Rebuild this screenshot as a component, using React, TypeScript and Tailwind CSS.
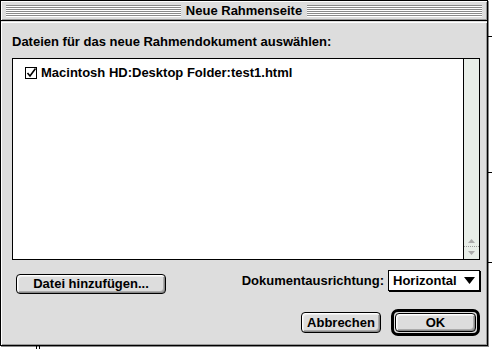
import React from "react";

// Mac OS 8 "Neue Rahmenseite" dialog

const FONT = "font-['Liberation_Sans',Arial,sans-serif]";

function Stripes({ className = "" }: { className?: string }) {
  return (
    <div
      className={[
        "h-[12px] bg-[repeating-linear-gradient(to_bottom,#8a8a8a_0px,#8a8a8a_1px,#ffffff_1px,#ffffff_2px)]",
        className,
      ].join(" ")}
    />
  );
}

function MacButton({ label, className = "" }: { label: string; className?: string }) {
  return (
    <div
      className={[
        "flex items-center justify-center rounded-[4px] border border-black bg-[#dddddd] text-[13px] font-bold text-black",
        "shadow-[inset_1px_1px_0_#ffffff,inset_-1px_-1px_0_#888888,inset_2px_2px_0_#eeeeee,inset_-2px_-2px_0_#aaaaaa]",
        className,
      ].join(" ")}
    >
      {label}
    </div>
  );
}

export default function App() {
  return (
    <div className={`relative h-[349px] w-[492px] overflow-hidden bg-white ${FONT}`}>
      {/* desktop marks behind the dialog */}
      <div className="absolute right-0 top-[36px] h-px w-[4px] bg-black" />
      <div className="absolute right-0 top-[172px] h-px w-[4px] bg-black" />
      <div className="absolute right-0 top-[262px] h-px w-[4px] bg-black" />
      <div className="absolute bottom-0 left-[36px] h-[4px] w-px bg-black" />
      <div className="absolute bottom-0 left-[39px] h-[4px] w-px bg-black" />

      <div className="flex h-[346px] w-[488px] flex-col border border-black bg-[#dddddd] shadow-[1px_1px_0_#888888]">
        {/* title bar */}
        <div className="flex h-[20px] items-center gap-[5px] border-b border-black px-[5px] shadow-[inset_1px_1px_0_#ffffff,inset_-1px_-1px_0_#999999]">
          <Stripes className="flex-1" />
          <div className="text-[13px] font-bold leading-none text-black">Neue Rahmenseite</div>
          <Stripes className="flex-1" />
        </div>

        {/* content */}
        <div className="flex flex-1 flex-col border-t border-[#dddddd] pl-[11px] pr-[7px] pt-[12px] shadow-[inset_1px_1px_0_#ffffff,inset_-1px_-1px_0_#999999]">
          <div className="h-[16px] text-[13px] font-bold leading-[16px] text-black">
            Dateien für das neue Rahmendokument auswählen:
          </div>

          {/* file list */}
          <div className="mt-[8px] flex h-[202px] border border-black bg-white">
            <div className="flex-1 pl-[12px] pt-[7px]">
              <div className="flex items-center gap-[4px]">
                <svg width="12" height="12" viewBox="0 0 12 12">
                  <rect x="0.5" y="0.5" width="11" height="11" fill="#fff" stroke="#000" />
                  <path d="M2.5 6 L5 9 L10.5 1.5" fill="none" stroke="#000" strokeWidth="1.6" />
                </svg>
                <span className="text-[13px] font-bold leading-[14px] text-black">
                  Macintosh HD:Desktop Folder:test1.html
                </span>
              </div>
            </div>
            <div className="flex w-[16px] flex-col justify-end border-l border-black bg-[#e8eee8]">
              <div className="flex h-[12px] items-center justify-center border-b border-dotted border-[#999999]">
                <svg width="7" height="4" viewBox="0 0 7 4">
                  <path d="M3.5 0 L7 4 L0 4 Z" fill="#aaaaaa" />
                </svg>
              </div>
              <div className="flex h-[12px] items-center justify-center">
                <svg width="7" height="4" viewBox="0 0 7 4">
                  <path d="M0 0 L7 0 L3.5 4 Z" fill="#aaaaaa" />
                </svg>
              </div>
            </div>
          </div>

          {/* add button + orientation popup */}
          <div className="mt-[10px] flex items-start justify-between">
            <MacButton label="Datei hinzufügen..." className="ml-[4px] mt-[4px] h-[20px] w-[150px]" />
            <div className="flex items-center gap-[4px]">
              <span className="text-[13px] font-bold text-black">Dokumentausrichtung:</span>
              <div className="flex h-[21px] w-[92px] items-center justify-between border border-black bg-white pl-[4px] pr-[4px] shadow-[1px_1px_0_#000000]">
                <span className="text-[13px] font-bold text-black">Horizontal</span>
                <svg width="11" height="7" viewBox="0 0 11 7">
                  <path d="M0 0 L11 0 L5.5 7 Z" fill="#000" />
                </svg>
              </div>
            </div>
          </div>

          {/* dialog buttons */}
          <div className="mt-[15px] flex items-center justify-end gap-[10px]">
            <MacButton label="Abbrechen" className="h-[21px] w-[80px]" />
            <div className="rounded-[7px] border-[3px] border-black p-px">
              <MacButton label="OK" className="h-[19px] w-[81px]" />
            </div>
          </div>
        </div>
      </div>
    </div>
  );
}
